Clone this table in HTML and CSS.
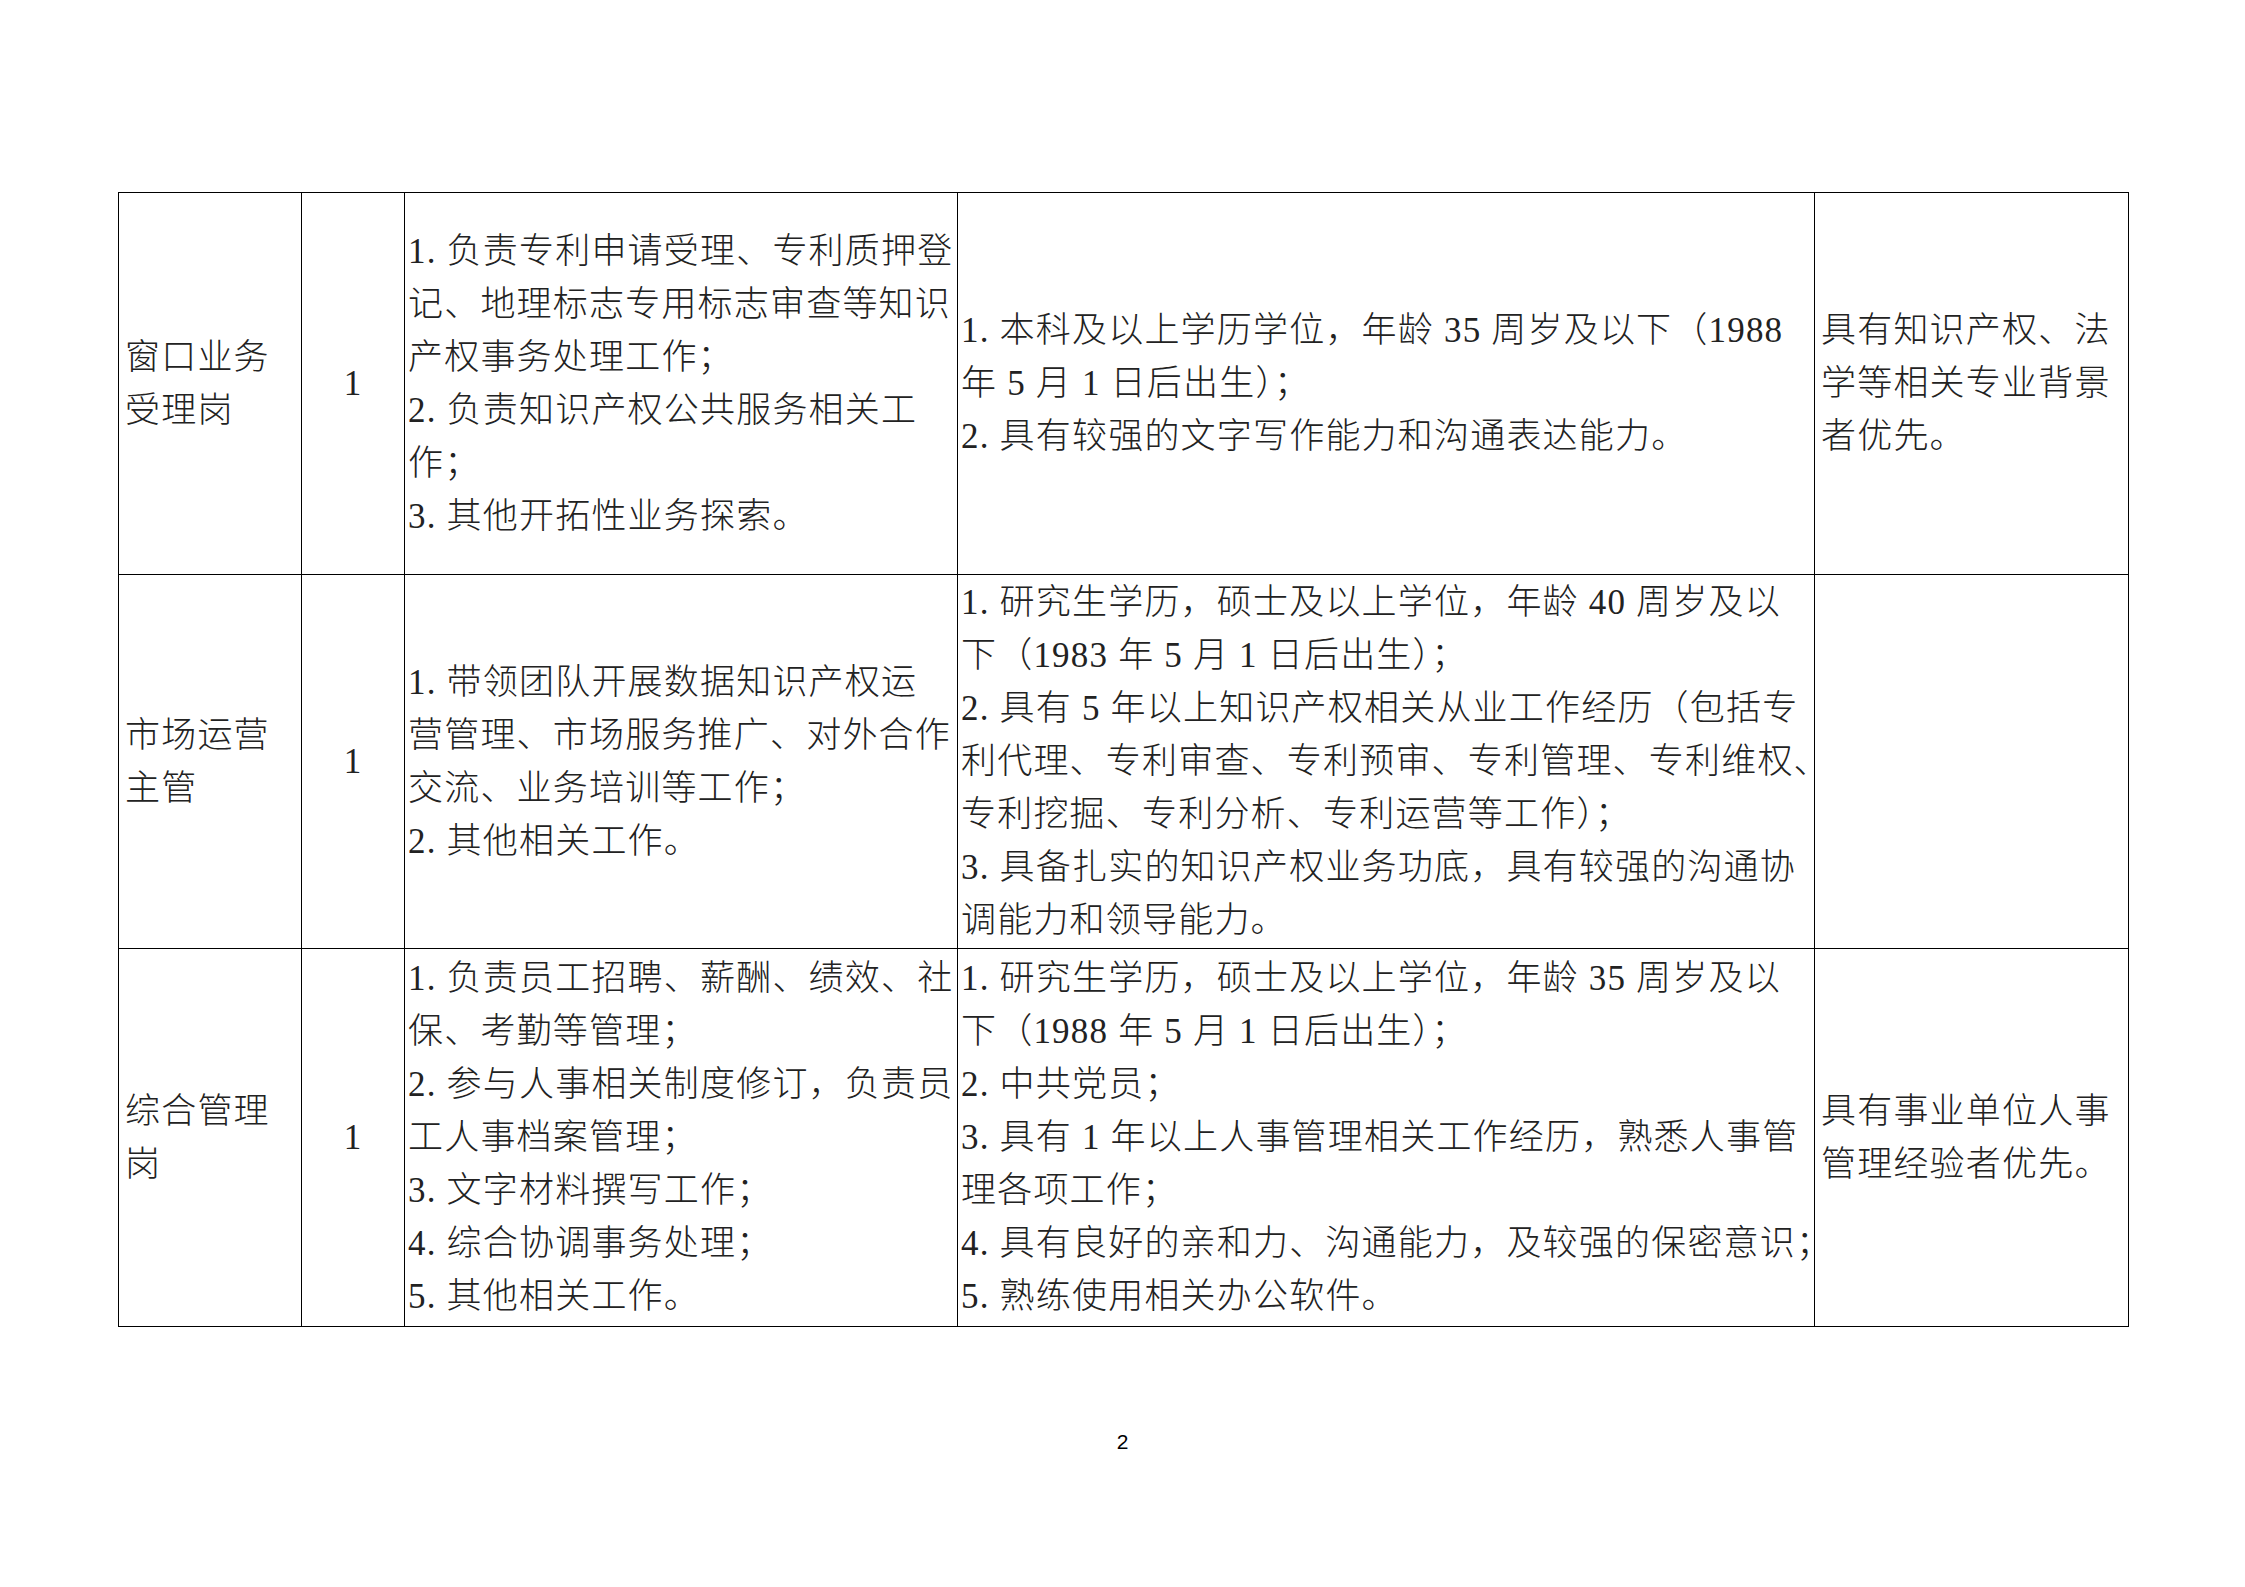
FILE: index.html
```html
<!DOCTYPE html>
<html lang="zh-CN">
<head>
<meta charset="utf-8">
<title>岗位表</title>
<link rel="stylesheet" href="styles.css">
</head>
<body>
<div class="page">
  <table class="jobs">
    <colgroup>
      <col class="c-name">
      <col class="c-num">
      <col class="c-duty">
      <col class="c-req">
      <col class="c-pref">
    </colgroup>
    <tbody>
      <tr class="r1">
        <td class="name">窗口业务<br>受理岗</td>
        <td class="num">1</td>
        <td class="duty">1. 负责专利申请受理、专利质押登<br>记、地理标志专用标志审查等知识<br>产权事务处理工作；<br>2. 负责知识产权公共服务相关工<br>作；<br>3. 其他开拓性业务探索。</td>
        <td class="req">1. 本科及以上学历学位，年龄 35 周岁及以下（1988<br>年 5 月 1 日后出生）；<br>2. 具有较强的文字写作能力和沟通表达能力。</td>
        <td class="pref">具有知识产权、法<br>学等相关专业背景<br>者优先。</td>
      </tr>
      <tr class="r2">
        <td class="name">市场运营<br>主管</td>
        <td class="num">1</td>
        <td class="duty">1. 带领团队开展数据知识产权运<br>营管理、市场服务推广、对外合作<br>交流、业务培训等工作；<br>2. 其他相关工作。</td>
        <td class="req">1. 研究生学历，硕士及以上学位，年龄 40 周岁及以<br>下（1983 年 5 月 1 日后出生）；<br>2. 具有 5 年以上知识产权相关从业工作经历（包括专<br>利代理、专利审查、专利预审、专利管理、专利维权、<br>专利挖掘、专利分析、专利运营等工作）；<br>3. 具备扎实的知识产权业务功底，具有较强的沟通协<br>调能力和领导能力。</td>
        <td class="pref"></td>
      </tr>
      <tr class="r3">
        <td class="name">综合管理<br>岗</td>
        <td class="num">1</td>
        <td class="duty">1. 负责员工招聘、薪酬、绩效、社<br>保、考勤等管理；<br>2. 参与人事相关制度修订，负责员<br>工人事档案管理；<br>3. 文字材料撰写工作；<br>4. 综合协调事务处理；<br>5. 其他相关工作。</td>
        <td class="req">1. 研究生学历，硕士及以上学位，年龄 35 周岁及以<br>下（1988 年 5 月 1 日后出生）；<br>2. 中共党员；<br>3. 具有 1 年以上人事管理相关工作经历，熟悉人事管<br>理各项工作；<br>4. 具有良好的亲和力、沟通能力，及较强的保密意识；<br>5. 熟练使用相关办公软件。</td>
        <td class="pref">具有事业单位人事<br>管理经验者优先。</td>
      </tr>
    </tbody>
  </table>
  <div class="page-num">2</div>
</div>
</body>
</html>
```

FILE: styles.css
```css
html, body {
  margin: 0;
  padding: 0;
  background: #ffffff;
}

.page {
  width: 2245px;
  height: 1587px;
  box-sizing: border-box;
  padding: 192px 0 0 118px;
  font-family: "Liberation Serif", "Noto Sans CJK SC", serif;
  color: #222222;
}

.jobs {
  border-collapse: collapse;
  table-layout: fixed;
  width: 2010px;
}

.c-name { width: 183px; }
.c-num { width: 103px; }
.c-duty { width: 553px; }
.c-req { width: 857px; }
.c-pref { width: 314px; }

.jobs td {
  border: 1px solid #000000;
  vertical-align: middle;
  font-size: 35px;
  font-weight: 300;
  line-height: 53px;
  letter-spacing: 1.2px;
  white-space: nowrap;
  padding: 0 2px 0 3px;
  text-align: left;
}

.r1 { height: 382px; }
.r2 { height: 374px; }
.r3 { height: 378px; }

.jobs td.name {
  padding-left: 6px;
}

.jobs td.num {
  text-align: center;
  padding: 0;
}

.jobs td.pref {
  padding-left: 6px;
}

.page-num {
  margin: 104px 0 0 -118px;
  width: 2245px;
  text-align: center;
  font-family: "Liberation Sans", "Noto Sans", sans-serif;
  font-size: 21px;
  line-height: 21px;
  color: #000000;
}
```
